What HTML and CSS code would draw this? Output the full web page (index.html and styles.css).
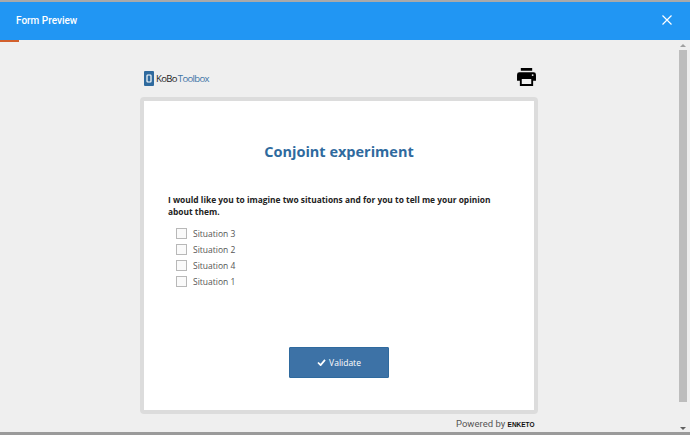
FILE: index.html
```html
<!DOCTYPE html>
<html lang="en">
<head>
<meta charset="utf-8">
<title>Form Preview</title>
<link rel="stylesheet" href="styles.css">
</head>
<body>
<div class="top-strip"></div>
<header class="modal-header">
  <span class="modal-title">Form Preview</span>
  <svg class="close-icon" width="10" height="10" viewBox="0 0 10 10"><path d="M.5.5l9 9M9.5.5l-9 9" stroke="#fff" stroke-width="1.2" fill="none"/></svg>
</header>
<div class="modal-body">
  <div class="progress"></div>
  <main class="content">
    <div class="form-wrap">
      <div class="brand-row">
        <div class="logo">
          <svg class="logo-mark" width="10" height="15" viewBox="0 0 10 15"><rect width="10" height="15" rx="1" fill="#2f6a9e"/><rect x="3" y="4" width="4" height="7" rx=".7" fill="none" stroke="#fff" stroke-width="1.2"/></svg>
          <span class="logo-kobo">KoBo</span><span class="logo-toolbox">Toolbox</span>
        </div>
        <svg class="print-icon" width="19" height="18" viewBox="0 0 20 19"><path fill="#000" fill-rule="evenodd" d="M4 0h12v3H4zM2.500 4.500h15A2.500 2.500 0 0 1 20 7v6.500h-3V19H3v-5.500H0V7a2.500 2.500 0 0 1 2.500-2.500zM5 11.500V17h10v-5.500zM16.500 6.500a1 1 0 1 0 0 2 1 1 0 0 0 0-2z"/></svg>
      </div>
      <section class="card">
        <h1 class="form-title">Conjoint experiment</h1>
        <p class="question">I would like you to imagine two situations and for you to tell me your opinion about them.</p>
        <ul class="options">
          <li class="option"><span class="checkbox"></span>Situation 3</li>
          <li class="option"><span class="checkbox"></span>Situation 2</li>
          <li class="option"><span class="checkbox"></span>Situation 4</li>
          <li class="option"><span class="checkbox"></span>Situation 1</li>
        </ul>
        <div class="actions">
          <button class="validate" type="button">
            <svg width="9" height="7" viewBox="0 0 10 8"><path d="M1 4l3 3 5-6" stroke="#fff" stroke-width="2" fill="none"/></svg>
            Validate
          </button>
        </div>
      </section>
      <div class="powered">Powered by <span class="enketo">ENKETO</span></div>
    </div>
  </main>
  <div class="scrollbar">
    <span class="arrow-up"></span>
    <div class="thumb"></div>
    <span class="arrow-down"></span>
  </div>
</div>
<div class="bottom-strip"></div>
</body>
</html>
```

FILE: styles.css
```css
* { box-sizing: border-box; }
html, body { margin: 0; height: 100%; }
body {
  width: 690px;
  height: 435px;
  overflow: hidden;
  display: flex;
  flex-direction: column;
  background: #efefef;
  font-family: "Open Sans", sans-serif;
}
.top-strip { height: 2px; background: #a9a9a9; }
.modal-header {
  height: 38px;
  background: #2196f3;
  display: flex;
  align-items: center;
  justify-content: space-between;
  padding: 0 18px 2px 16px;
}
.modal-title {
  font: 500 10px Roboto, sans-serif;
  color: #fff;
}
.modal-body {
  flex: 1;
  display: flex;
  position: relative;
  min-height: 0;
}
.progress {
  position: absolute;
  left: 0;
  top: 0;
  width: 19px;
  height: 2px;
  background: #d2602c;
}
.content {
  flex: 1;
  display: flex;
  justify-content: center;
  padding: 27px 0 0;
  min-width: 0;
}
.form-wrap { width: 398px; }
.brand-row {
  height: 30px;
  display: flex;
  align-items: flex-start;
  justify-content: space-between;
  padding: 1px 2px 0 4px;
}
.logo {
  display: flex;
  align-items: center;
  height: 16px;
  margin-top: 2px;
  font: 400 9.500px "Open Sans", sans-serif;
  letter-spacing: -.65px;
}
.logo-mark { margin-right: 2px; }
.logo-kobo { color: #222; }
.logo-toolbox { color: #3d74a6; margin-left: 1px; }
.card {
  height: 317px;
  background: #fff;
  border: 4px solid #dcdcdc;
  border-radius: 4px;
  display: flex;
  flex-direction: column;
  padding: 0 24px;
}
.form-title {
  margin: 41px 0 0;
  text-align: center;
  font: 700 14.500px/20px "Open Sans", sans-serif;
  color: #2f6a9e;
}
.question {
  margin: 32px 0 0;
  font: 700 8.400px/12px "Open Sans", sans-serif;
  color: #222;
}
.options {
  list-style: none;
  margin: 7px 0 0;
  padding: 0 0 0 8px;
}
.option {
  height: 16px;
  display: flex;
  align-items: center;
  font: 400 8.500px "Open Sans", sans-serif;
  color: #555;
}
.checkbox {
  width: 11px;
  height: 11px;
  border: 1px solid #b8b8b8;
  background: #fafafa;
  margin-right: 6px;
}
.actions {
  margin-top: auto;
  padding-bottom: 32px;
  display: flex;
  justify-content: center;
}
.validate {
  width: 100px;
  height: 31px;
  background: #3d72a6;
  border: 1px solid #2f6a9e;
  border-radius: 1px;
  color: #fff;
  font: 400 8.500px "Open Sans", sans-serif;
  display: flex;
  align-items: center;
  justify-content: center;
  gap: 3px;
  padding: 0;
}
.powered {
  margin-top: 3px;
  padding-left: 316px;
  white-space: nowrap;
  font: 400 9.500px/14px Roboto, sans-serif;
  color: #555;
}
.enketo {
  font: 700 6.500px "Liberation Sans", sans-serif;
  color: #111;
}
.scrollbar {
  width: 12px;
  display: flex;
  flex-direction: column;
  align-items: center;
  padding: 4px 3px 2px 0;
}
.thumb {
  width: 8px;
  height: 352px;
  margin: 3px 0;
  background: #bdbdbd;
}
.arrow-up, .arrow-down {
  width: 0;
  height: 0;
  border-left: 3px solid transparent;
  border-right: 3px solid transparent;
}
.arrow-up { border-bottom: 3px solid #a0a0a0; }
.arrow-down { border-top: 3px solid #606060; margin-top: auto; }
.bottom-strip { height: 3px; background: #9a9a9a; }
```
